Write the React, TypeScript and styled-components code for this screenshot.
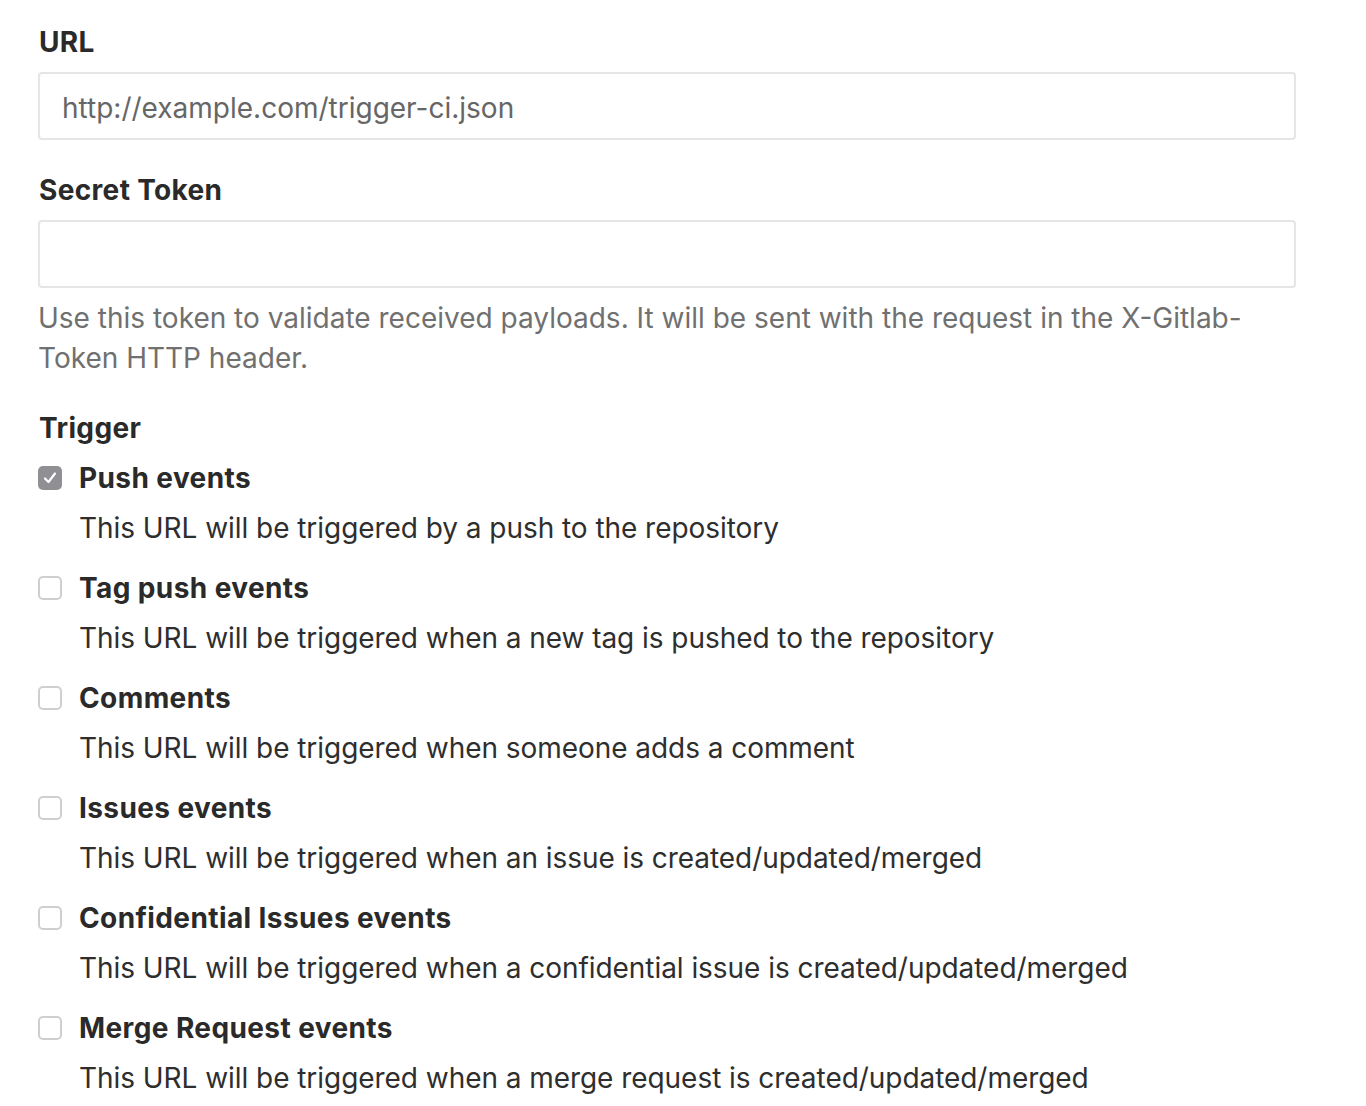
import React from "react";
import styled, { createGlobalStyle } from "styled-components";

const Global = createGlobalStyle`
  html, body { margin: 0; padding: 0; background: #fff; }
  body { font-family: Inter, "Noto Sans", "Liberation Sans", sans-serif; color: #2e2e2e; -webkit-font-smoothing: antialiased; }
`;

const Form = styled.form`
  width: 1258px;
  padding: 22px 0 0 38px;
  display: flex;
  flex-direction: column;
  font-size: 28px;
  line-height: 40px;
`;

const Group = styled.div<{ $gap?: number }>`
  display: flex;
  flex-direction: column;
  gap: 10px;
  margin-bottom: ${(p) => p.$gap ?? 30}px;
`;

const Label = styled.label`
  font-weight: 700;
  color: #2a2a2a;
  letter-spacing: 0.35px;
  padding-left: 1px;
`;

const Input = styled.input`
  box-sizing: border-box;
  height: 68px;
  width: 100%;
  border: 2px solid #e5e5e5;
  border-radius: 4px;
  padding: 4px 22px 0;
  font: inherit;
  font-size: 28px;
  color: #2e2e2e;
  outline: none;
  &::placeholder { color: #666; }
`;

const Help = styled.p`
  margin: 0;
  color: #707070;
`;

const EventList = styled.div`
  display: flex;
  flex-direction: column;
  gap: 20px;
`;

const EventItem = styled.div`
  display: grid;
  grid-template-columns: 41px 1fr;
  row-gap: 10px;
`;

const Box = styled.span<{ $checked: boolean }>`
  box-sizing: border-box;
  width: 24px;
  height: 24px;
  margin-top: 8px;
  border-radius: 5px;
  display: flex;
  align-items: center;
  justify-content: center;
  background: ${(p) => (p.$checked ? "#8f8f94" : "#fff")};
  border: ${(p) => (p.$checked ? "none" : "2px solid #cfcfcf")};
`;

const EventTitle = styled.span`
  font-weight: 700;
  color: #2a2a2a;
  letter-spacing: 0.4px;
`;

const EventDesc = styled.span`
  grid-column: 2;
  color: #2e2e2e;
  letter-spacing: -0.05px;
`;

const events = [
  { title: "Push events", desc: "This URL will be triggered by a push to the repository", checked: true },
  { title: "Tag push events", desc: "This URL will be triggered when a new tag is pushed to the repository", checked: false },
  { title: "Comments", desc: "This URL will be triggered when someone adds a comment", checked: false },
  { title: "Issues events", desc: "This URL will be triggered when an issue is created/updated/merged", checked: false },
  { title: "Confidential Issues events", desc: "This URL will be triggered when a confidential issue is created/updated/merged", checked: false },
  { title: "Merge Request events", desc: "This URL will be triggered when a merge request is created/updated/merged", checked: false },
];

export default function App() {
  return (
    <>
      <Global />
      <Form>
        <Group>
          <Label>URL</Label>
          <Input placeholder="http://example.com/trigger-ci.json" />
        </Group>
        <Group>
          <Label>Secret Token</Label>
          <Input />
          <Help>
            Use this token to validate received payloads. It will be sent with the request in the X-Gitlab-Token HTTP header.
          </Help>
        </Group>
        <Group $gap={0}>
          <Label>Trigger</Label>
          <EventList>
            {events.map((e) => (
              <EventItem key={e.title}>
                <Box $checked={e.checked}>
                  {e.checked && (
                    <svg width="18" height="18" viewBox="0 0 18 18">
                      <path d="M4 9.5 L7.5 13 L14 4.5" fill="none" stroke="#fff" strokeWidth="2.2" strokeLinecap="round" strokeLinejoin="round" />
                    </svg>
                  )}
                </Box>
                <EventTitle>{e.title}</EventTitle>
                <EventDesc>{e.desc}</EventDesc>
              </EventItem>
            ))}
          </EventList>
        </Group>
      </Form>
    </>
  );
}
